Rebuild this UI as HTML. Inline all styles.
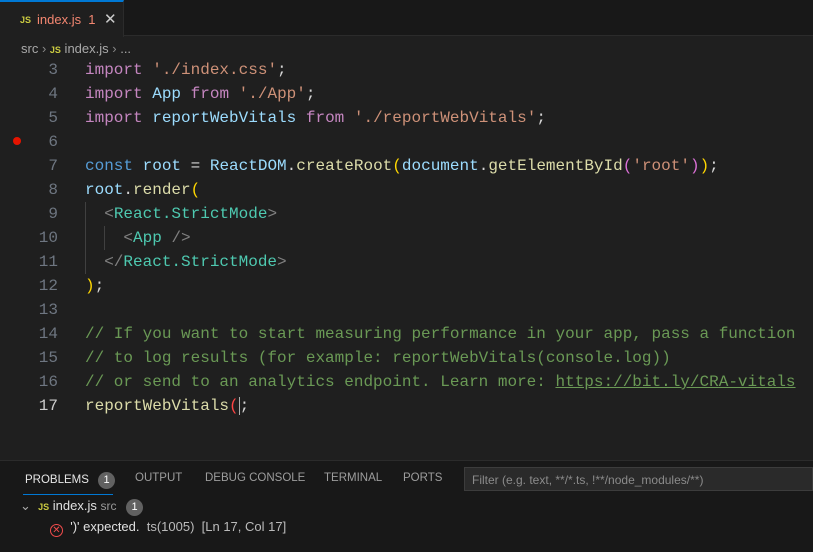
<!DOCTYPE html>
<html><head><meta charset="utf-8"><style>
*{margin:0;padding:0;box-sizing:border-box}
body{width:813px;height:552px;background:#1f1f1f;font-family:"Liberation Sans",sans-serif;overflow:hidden;position:relative;color:#ccc}
.tabbar{position:absolute;top:0;left:0;width:813px;height:36px;background:#181818;border-bottom:1px solid #2b2b2b}
.tab{position:absolute;left:0;top:0;width:124px;height:37px;background:#1f1f1f;border-top:2px solid #0078d4;border-right:1px solid #2b2b2b}
.js{color:#cbcb41;font-weight:bold;font-size:9px}
.crumb{position:absolute;top:41px;left:21px;font-size:13px;color:#a9a9a9}
.code{position:absolute;top:58px;left:0;font-family:"Liberation Mono",monospace;font-size:16px}
.ln{position:absolute;left:0;width:58px;text-align:right;color:#6e7681;height:24px;line-height:24px}
.tx{position:absolute;left:85px;height:24px;line-height:24px;white-space:pre;color:#d4d4d4}
.k{color:#c586c0}.b{color:#569cd6}.v{color:#9cdcfe}.s{color:#ce9178}.f{color:#dcdcaa}.c{color:#6a9955}.t{color:#4ec9b0}.g{color:#808080}.y{color:#ffd700}.p{color:#da70d6}
.panel{position:absolute;top:460px;left:0;width:813px;height:92px;background:#181818;border-top:1px solid #2b2b2b;font-size:12px}
.pt{position:absolute;top:11px;color:#9d9d9d;font-size:11.5px}
.badge{display:inline-block;background:#616161;color:#fff;border-radius:9px;width:17px;height:17px;text-align:center;line-height:17px;font-size:11px}
</style></head><body>
<div class="tabbar"><div class="tab"><span class="js" style="position:absolute;left:20px;top:13px">JS</span><span style="position:absolute;left:37px;top:10px;font-size:13px;color:#f48771">index.js&nbsp;&nbsp;1</span><span style="position:absolute;left:104px;top:8px;font-size:15px;color:#ccc">✕</span></div></div>
<div class="crumb">src <span style="color:#888">›</span> <span class="js">JS</span> index.js <span style="color:#888">›</span> ...</div>
<div style="position:absolute;left:13px;top:137px;width:8px;height:8px;border-radius:50%;background:#e51400"></div>
<div style="position:absolute;left:85px;top:202px;width:1px;height:72px;background:#404040"></div>
<div style="position:absolute;left:104px;top:226px;width:1px;height:24px;background:#404040"></div>
<div class="code">
<div class="ln" style="top:0">3</div><div class="tx" style="top:0"><span class="k">import</span> <span class="s">'./index.css'</span>;</div>
<div class="ln" style="top:24px">4</div><div class="tx" style="top:24px"><span class="k">import</span> <span class="v">App</span> <span class="k">from</span> <span class="s">'./App'</span>;</div>
<div class="ln" style="top:48px">5</div><div class="tx" style="top:48px"><span class="k">import</span> <span class="v">reportWebVitals</span> <span class="k">from</span> <span class="s">'./reportWebVitals'</span>;</div>
<div class="ln" style="top:72px">6</div>
<div class="ln" style="top:96px">7</div><div class="tx" style="top:96px"><span class="b">const</span> <span class="v">root</span> = <span class="v">ReactDOM</span>.<span class="f">createRoot</span><span class="y">(</span><span class="v">document</span>.<span class="f">getElementById</span><span class="p">(</span><span class="s">'root'</span><span class="p">)</span><span class="y">)</span>;</div>
<div class="ln" style="top:120px">8</div><div class="tx" style="top:120px"><span class="v">root</span>.<span class="f">render</span><span class="y">(</span></div>
<div class="ln" style="top:144px">9</div><div class="tx" style="top:144px">  <span class="g">&lt;</span><span class="t">React.StrictMode</span><span class="g">&gt;</span></div>
<div class="ln" style="top:168px">10</div><div class="tx" style="top:168px">    <span class="g">&lt;</span><span class="t">App</span> <span class="g">/&gt;</span></div>
<div class="ln" style="top:192px">11</div><div class="tx" style="top:192px">  <span class="g">&lt;/</span><span class="t">React.StrictMode</span><span class="g">&gt;</span></div>
<div class="ln" style="top:216px">12</div><div class="tx" style="top:216px"><span class="y">)</span>;</div>
<div class="ln" style="top:240px">13</div>
<div class="ln" style="top:264px">14</div><div class="tx c" style="top:264px">// If you want to start measuring performance in your app, pass a function</div>
<div class="ln" style="top:288px">15</div><div class="tx c" style="top:288px">// to log results (for example: reportWebVitals(console.log))</div>
<div class="ln" style="top:312px">16</div><div class="tx c" style="top:312px">// or send to an analytics endpoint. Learn more: <u>https://bit.ly/CRA-vitals</u></div>
<div class="ln" style="top:336px;color:#ccc">17</div><div class="tx" style="top:336px"><span class="f">reportWebVitals</span><span style="color:#f44">(</span><span style="border-left:1px solid #aeafad">;</span></div>
</div>
<div class="panel">
<div class="pt" style="left:25px;color:#e7e7e7">PROBLEMS <span class="badge" style="margin-left:6px">1</span></div>
<div style="position:absolute;left:23px;top:33px;width:90px;height:1px;background:#0078d4"></div>
<div class="pt" style="left:135px">OUTPUT</div>
<div class="pt" style="left:205px">DEBUG CONSOLE</div>
<div class="pt" style="left:324px">TERMINAL</div>
<div class="pt" style="left:403px">PORTS</div>
<div style="position:absolute;left:464px;top:6px;width:349px;height:24px;background:#2a2a2a;border:1px solid #3c3c3c;font-size:12px;color:#8b8b8b;padding:5px 7px">Filter (e.g. text, **/*.ts, !**/node_modules/**)</div>
<div style="position:absolute;left:20px;top:37px;font-size:13px;color:#e0e0e0"><span style="color:#aaa">⌄</span>&nbsp;&nbsp;<span class="js">JS</span> index.js <span style="color:#999;font-size:12px">src</span> <span class="badge" style="margin-left:6px">1</span></div>
<div style="position:absolute;left:50px;top:58px;font-size:13px;color:#e0e0e0"><span style="display:inline-block;width:13px;height:13px;border:1px solid #f14c4c;border-radius:50%;color:#f14c4c;font-size:10px;line-height:11px;text-align:center;vertical-align:-2px">✕</span>&nbsp; ')' expected.&nbsp; <span style="color:#bbb">ts(1005)&nbsp; [Ln 17, Col 17]</span></div>
</div>
</body></html>
